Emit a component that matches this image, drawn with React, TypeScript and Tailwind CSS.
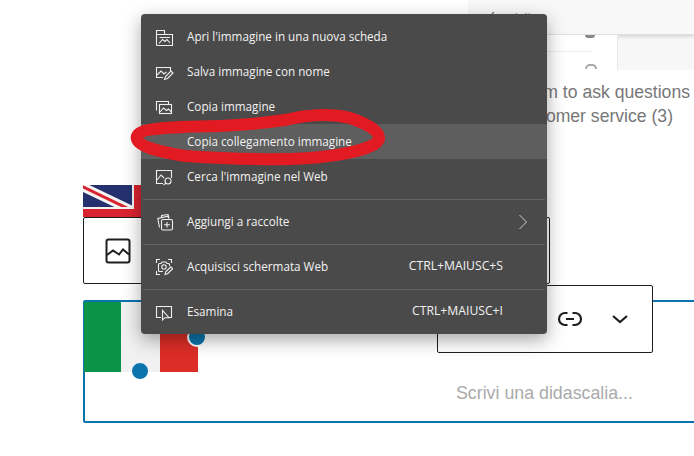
const S = "#efefef";

function Ico({ children }: { children: React.ReactNode }) {
  return (
    <svg width="20" height="20" viewBox="0 0 20 20" fill="none" stroke={S} strokeWidth="1.1" className="shrink-0">
      {children}
    </svg>
  );
}

const icons: Record<string, React.ReactNode> = {
  open: (
    <Ico>
      <path d="M2.5 18.5V3.5H10.5V7.5H2.5M10.5 7.5H18.5V18.5H2.5" />
      <path d="M5 16.5l3.5-4 2.5 2 2-2 3 3.5" />
      <path d="M5.5 10.5H16" />
    </Ico>
  ),
  save: (
    <Ico>
      <path d="M9 15.5H2.5V5.5H16.5V9" />
      <path d="M3 13l4-4 3 3 2.5-2" />
      <path d="M10.5 17.5l1-3 5.5-5.5 2 2-5.5 5.5z" />
    </Ico>
  ),
  copy: (
    <Ico>
      <path d="M2.5 13.5V4.5H14.5V7" />
      <rect x="5.5" y="7.5" width="12" height="9" />
      <path d="M6 15l3.5-4 3 2.5 2-1.5 3 3" />
    </Ico>
  ),
  search: (
    <Ico>
      <path d="M9 16.5H2.5V3.5H17.5V11" />
      <path d="M3 13l4-5 3 3" />
      <circle cx="14" cy="14" r="3" />
      <path d="M11.8 16.2l-2.3 2" />
    </Ico>
  ),
  add: (
    <Ico>
      <path d="M5.5 15.5L3.8 6.5 14 4.2l.6 2.3" />
      <path d="M7.5 6V3.5l6.5-1 1 3.5" />
      <rect x="7.5" y="7.5" width="11" height="10.5" rx="1.5" />
      <path d="M13 10v5.5M10 12.8h6" />
    </Ico>
  ),
  shot: (
    <Ico>
      <path d="M2.5 6V2.5H6M14 2.5h3.5V6M2.5 14v3.5H6" />
      <path d="M9 14.5H5.5a1 1 0 0 1-1-1V7.5a1 1 0 0 1 1-1H7l1-1.5h4l1 1.5h1.5a1 1 0 0 1 1 1V9" />
      <circle cx="10" cy="10" r="2.2" />
      <path d="M11 17.5l.8-2.6 5-5 1.8 1.8-5 5z" />
    </Ico>
  ),
  inspect: (
    <Ico>
      <path d="M7 15.5H2.5V4.5H17.5V15.5H15" />
      <path d="M8.5 8.5V18l2.3-2.3H15z" />
    </Ico>
  ),
};

function Row({ icon, label, kbd, arrow, hl }: { icon?: string; label: string; kbd?: string; arrow?: boolean; hl?: boolean }) {
  return (
    <div className={`flex h-[35px] items-center pl-[13px] ${hl ? "bg-[#5e5e5e]" : ""}`}>
      <div className="flex w-[33px]">{icon ? icons[icon] : null}</div>
      <span className="flex-1 whitespace-nowrap">{label}</span>
      {kbd ? <span className="whitespace-nowrap pr-[44px] text-[12.2px]">{kbd}</span> : null}
      {arrow ? (
        <svg width="10" height="16" viewBox="0 0 10 16" fill="none" stroke="#cfcfcf" strokeWidth="1" className="mr-[19px]">
          <path d="M1.5 1l7 7-7 7" />
        </svg>
      ) : null}
    </div>
  );
}

const Sep = () => <div className="mx-[2px] mb-[4px] mt-[5px] h-px bg-[#636363]" />;

export default function App() {
  return (
    <div className="relative h-[456px] w-[694px] overflow-hidden bg-white font-['Liberation_Sans',sans-serif]">
      {/* background page fragment, top right */}
      <div className="flex h-[70px] justify-end">
        <div className="flex h-[70px] w-[224px] flex-col bg-[#f7f7f7]">
          <div className="flex h-[35px] items-center gap-[18px] border-b border-[#e0e0e0] bg-[#f8f8f8] pl-[17px] text-[10px] text-[#999999] shadow-[0_2px_3px_rgba(0,0,0,0.12)]">
            <svg width="8" height="12" viewBox="0 0 8 12" fill="none" stroke="#888888" strokeWidth="1.5">
              <path d="M7 1L2 6l5 5" />
            </svg>
            <span className="tracking-[1px]">A fiero</span>
          </div>
          <div className="flex flex-1">
            <div className="flex w-[148px] flex-col border-r border-[#e8e8e8] bg-white pl-[80px]">
              <div className="ml-[35px] h-[3px] w-[10px] rounded-b-full bg-[#888888]" />
              <div className="-ml-[80px] mt-[13px] h-px w-[122px] bg-[#eeeeee]" />
              <div className="ml-[35px] mt-[12px] h-[5px] w-[12px] rounded-t-full border-[2px] border-b-0 border-[#aaaaaa]" />
            </div>
          </div>
        </div>
      </div>
      <div className="h-[115px] pt-[10px] text-[17.6px] leading-[24px] text-[#777777]">
        <div className="whitespace-nowrap pr-[4px] text-right">Use this form to ask questions</div>
        <div className="whitespace-nowrap pr-[21px] text-right">to our customer service (3)</div>
      </div>

      {/* editor blocks */}
      <div className="pl-[83px]">
        <div className="flex h-[32px] w-[100px] bg-[#d9232e]">
          <div className="h-[24px] w-[51px] overflow-hidden border-b-[2px] border-r-[2px] border-[#f2f2f2] bg-[#25316f]">
            <svg width="49" height="22" viewBox="0 0 49 22">
              <path d="M-2 1L48 25" stroke="#f4f4f4" strokeWidth="9" />
              <path d="M-2 1L48 25" stroke="#d9232e" strokeWidth="3" />
            </svg>
          </div>
        </div>
        <div className="flex h-[67px] w-[467px] items-center rounded-[2px] border border-[#1e1e1e] bg-white pl-[21px]">
          <svg width="26" height="26" viewBox="0 0 26 26" fill="none" stroke="#1e1e1e" strokeWidth="2">
            <rect x="1.5" y="1.5" width="23" height="23" rx="2" />
            <path d="M2 17l6-4.5 6 4 4-5 6 5" />
          </svg>
        </div>
        <div className="mt-[16px] h-[123px] w-[640px] rounded-[2px] border-2 border-[#0c74ad] bg-white">
          <div className="-ml-px flex h-[70px] w-[114px]">
            <div className="w-[37px] bg-[#0b9449]" />
            <div className="w-[39px] bg-[#f1f1f1]" />
            <div className="w-[38px] bg-[#dc2d27]" />
          </div>
          <div className="mt-[10px] whitespace-nowrap pl-[371px] text-[17.8px] leading-[22px] text-[#aaaaaa]">
            Scrivi una didascalia...
          </div>
        </div>
      </div>

      {/* resize handles */}
      <div className="absolute left-[131px] top-[362px] h-[18px] w-[18px] rounded-full border border-white bg-[#0c74ad]" />
      <div className="absolute left-[187px] top-[327px] h-[20px] w-[20px] rounded-full border-[2px] border-white bg-[#0c74ad]" />

      {/* block toolbar */}
      <div className="absolute left-[437px] top-[285px] flex h-[68px] w-[216px] items-center justify-end gap-[28px] rounded-[2px] border border-[#1e1e1e] bg-white pr-[23px]">
        <svg width="26" height="26" viewBox="0 0 26 26" fill="none" stroke="#1e1e1e" strokeWidth="2.2">
          <path d="M10.5 7H8a6 6 0 0 0 0 12h2.5M15.5 7H18a6 6 0 0 1 0 12h-2.5M9 13h8" />
        </svg>
        <svg width="18" height="12" viewBox="0 0 18 12" fill="none" stroke="#1e1e1e" strokeWidth="2.2">
          <path d="M2 3l7 6 7-6" />
        </svg>
      </div>

      {/* context menu */}
      <div className="absolute left-[141px] top-[14px] h-[320px] w-[406px] overflow-hidden rounded-[4px] bg-[#4a4a4a] pt-[5px] font-['Open_Sans',sans-serif] text-[11.7px] text-[#f2f2f2] shadow-[0_6px_18px_rgba(0,0,0,0.35)]">
        <Row icon="open" label="Apri l'immagine in una nuova scheda" />
        <Row icon="save" label="Salva immagine con nome" />
        <Row icon="copy" label="Copia immagine" />
        <Row label="Copia collegamento immagine" hl />
        <Row icon="search" label="Cerca l'immagine nel Web" />
        <Sep />
        <Row icon="add" label="Aggiungi a raccolte" arrow />
        <Sep />
        <Row icon="shot" label="Acquisisci schermata Web" kbd="CTRL+MAIUSC+S" />
        <Sep />
        <Row icon="inspect" label="Esamina" kbd="CTRL+MAIUSC+I" />
      </div>

      {/* red marker scribble */}
      <svg className="pointer-events-none absolute left-0 top-0" width="694" height="456" viewBox="0 0 694 456" fill="none">
        <path
          d="M137 136C140 129 160 127 220 126C250 125 270 122 285 120C305 115 330 113 350 118C368 124 380 131 379 139C377 148 345 155 310 158C280 160 230 159 185 156C160 152 134 146 137 136Z"
          stroke="#e21b22"
          strokeWidth="12"
          strokeLinejoin="round"
        />
      </svg>
    </div>
  );
}
